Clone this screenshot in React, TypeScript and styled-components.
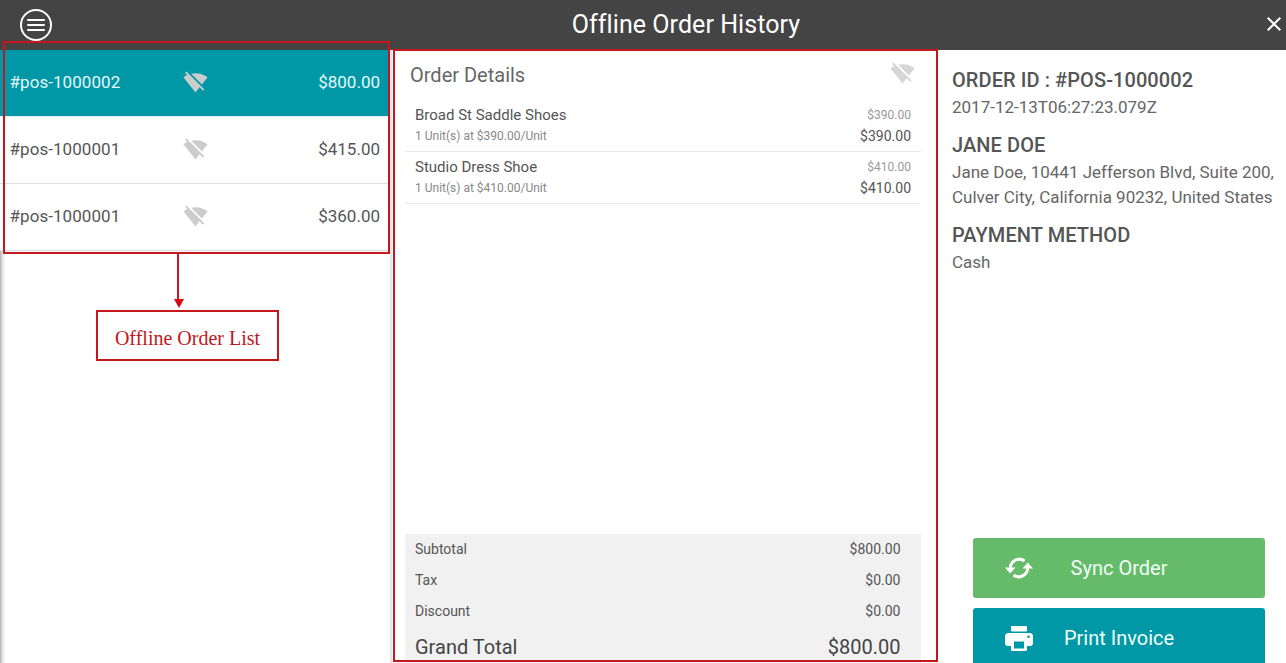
import React from "react";
import styled, { createGlobalStyle } from "styled-components";
import { MdSignalWifiOff, MdClose } from "react-icons/md";

const Global = createGlobalStyle`
  html, body { margin: 0; padding: 0; height: 100%; overflow: hidden; background: #fff; }
  * { box-sizing: border-box; }
  body { font-family: Roboto, "Liberation Sans", sans-serif; color: #555; }
`;
const Page = styled.div`
  position: relative; width: 1286px; height: 663px; overflow: hidden;
  display: flex; flex-direction: column; background: #fff;
`;
const Header = styled.header`
  position: relative; flex: 0 0 50px; height: 50px; background: #444; padding-left: 86px;
  display: flex; align-items: center; justify-content: center;
`;
const Title = styled.h1`
  margin: 0 0 2px; font-size: 25px; font-weight: 400; color: #fff; letter-spacing: 0.06px;
`;
const MenuButton = styled.div`
  position: absolute; left: 20px; top: 9px; width: 32px; height: 32px;
  border: 2px solid #fff; border-radius: 50%;
  display: flex; flex-direction: column; align-items: center; justify-content: center; gap: 3px;
`;
const MenuBar = styled.span`
  display: block; width: 18px; height: 2px; background: #fff; border-radius: 1px;
`;
const CloseButton = styled.div`
  position: absolute; right: 0; top: 12px; width: 24px; height: 24px; color: #fff;
  display: flex; align-items: center; justify-content: center;
`;
const Body = styled.main`
  flex: 1; min-height: 0; display: flex;
`;
const ListColumn = styled.section`
  flex: 0 0 392px; border-right: 2px solid #e6e6e6;
  background: linear-gradient(90deg, #b5b5b5 0, #ececec 3px, #fff 6px);
`;
const OrderRow = styled.div<{ $active?: boolean }>`
  height: 67px; padding: 0 10px 2px 9.5px; display: grid; grid-template-columns: 173.5px 28px 1fr;
  align-items: center; font-size: 17px; letter-spacing: 0.06px;
  background: ${(p) => (p.$active ? "#0097a7" : "#fff")};
  color: ${(p) => (p.$active ? "#e6f7f9" : "#555")};
  border-bottom: 1px solid ${(p) => (p.$active ? "#dff3f5" : "#ddd")};
`;
const WifiIcon = styled(MdSignalWifiOff)`
  display: block; color: #ccc; width: 25px; height: 25px;
`;
const HeadWifiIcon = styled(WifiIcon)`
  color: #d6d6d6; margin-top: -2px;
`;
const RowPrice = styled.span`
  text-align: right; letter-spacing: 0;
`;
const DetailColumn = styled.section`
  flex: 0 0 545px; height: 100%; padding: 0 16px 0 13px; display: flex; flex-direction: column;
`;
const DetailHead = styled.div`
  height: 50px; padding: 13px 6px 0 5px; display: flex; justify-content: space-between; align-items: flex-start;
`;
const DetailTitle = styled.h2`
  margin: 0; font-size: 20px; line-height: 24px; font-weight: 400; color: #666;
`;
const ItemList = styled.div`
  flex: 1; min-height: 0;
`;
const Item = styled.div`
  height: 52px; padding: 5px 10px 0 10px; border-bottom: 1px solid #e8e8e8;
  display: flex; justify-content: space-between;
`;
const ItemColumn = styled.div<{ $right?: boolean }>`
  display: flex; flex-direction: column; align-items: ${(p) => (p.$right ? "flex-end" : "flex-start")};
`;
const ItemName = styled.div`
  font-size: 15px; line-height: 20px; color: #555;
`;
const ItemUnit = styled.div`
  font-size: 12px; line-height: 20px; margin-top: 1px; color: #888;
`;
const ItemPrice = styled.div`
  font-size: 12px; line-height: 20px; color: #999;
`;
const ItemTotal = styled.div`
  font-size: 14px; line-height: 20px; margin-top: 1px; color: #555;
`;
const Summary = styled.div`
  flex: 0 0 129px; background: #f1f1f1; padding: 0 20.5px 0 10px;
`;
const SummaryRow = styled.div`
  height: 31px; padding-bottom: 2px; display: flex; justify-content: space-between; align-items: center; font-size: 14px; color: #555;
`;
const GrandRow = styled.div`
  height: 36px; padding-top: 4px; display: flex; justify-content: space-between; align-items: center;
  font-size: 20px; color: #444;
`;
const InfoColumn = styled.aside`
  flex: 1; min-width: 0; padding: 18px 0 0 15px; position: relative; display: flex; flex-direction: column;
`;
const InfoHeading = styled.h3`
  margin: 0; font-size: 20px; line-height: 25px; font-weight: 500; color: #555; letter-spacing: 0.08px;
`;
const InfoText = styled.p`
  margin: 2px 0 0; font-size: 17px; line-height: 25px; color: #666; white-space: nowrap;
`;
const InfoBlock = styled.div`
  margin-bottom: 13px;
`;
const Actions = styled.div`
  margin-top: auto; margin-bottom: -5px; padding-left: 21px; width: 313px;
  display: flex; flex-direction: column; gap: 10px;
`;
const ActionButton = styled.div<{ $color: string }>`
  height: 60px; border-radius: 3px; background: ${(p) => p.$color}; color: #f0fff5;
  display: grid; grid-template-columns: 90px 1fr 90px; align-items: center; font-size: 20px; text-align: center; white-space: nowrap;
`;
const ActionIcon = styled.span`
  display: flex; justify-content: center; padding-left: 2px;
`;
const Frame = styled.div<{ $x: number; $y: number; $w: number; $h: number }>`
  position: absolute; left: ${(p) => p.$x}px; top: ${(p) => p.$y}px; width: ${(p) => p.$w}px; height: ${(p) => p.$h}px;
  border: 2px solid #c4161c; pointer-events: none;
`;
const Stem = styled.div`
  position: absolute; left: 177px; top: 254px; width: 2px; height: 46px; background: #c4161c;
`;
const ArrowHead = styled.div`
  position: absolute; left: 173.5px; top: 299px; width: 0; height: 0;
  border-left: 5px solid transparent; border-right: 5px solid transparent; border-top: 9px solid #d9060f;
`;
const Callout = styled.div`
  position: absolute; left: 96px; top: 310px; width: 183px; height: 51px;
  border: 2px solid #c4161c; background: #fff; color: #c4161c;
  font-family: "Liberation Serif", serif; font-size: 20px;
  display: flex; align-items: center; justify-content: center; padding-top: 5px;
`;

const SyncGlyph = () => (
  <svg width="28" height="24" viewBox="0 0 28 24" fill="none">
    <path d="M5.5 13 A8.8 8.8 0 0 1 19.5 5" stroke="#fff" strokeWidth="3" />
    <path d="M22.5 11 A8.8 8.8 0 0 1 8.5 19" stroke="#fff" strokeWidth="3" />
    <path d="M0 11.5 H10.5 L5.2 17.5 Z" fill="#fff" />
    <path d="M17.5 12.5 H28 L22.8 6.5 Z" fill="#fff" />
  </svg>
);
const PrintGlyph = () => (
  <svg width="28" height="25" viewBox="0 0 28 25">
    <rect x="6" y="0" width="16" height="5.5" rx="1" fill="#fff" />
    <path
      fillRule="evenodd"
      fill="#fff"
      d="M3.5 7 H24.5 A3.5 3.5 0 0 1 28 10.5 V17 A3 3 0 0 1 25 20 H22 V24 A1 1 0 0 1 21 25 H7 A1 1 0 0 1 6 24 V20 H3 A3 3 0 0 1 0 17 V10.5 A3.5 3.5 0 0 1 3.5 7 Z M23.5 9.5 A1.3 1.3 0 1 0 23.5 12.1 A1.3 1.3 0 1 0 23.5 9.5 Z M9 15.5 V22.5 H19 V15.5 Z"
    />
  </svg>
);

const orders = [
  { id: "#pos-1000002", price: "$800.00", active: true },
  { id: "#pos-1000001", price: "$415.00" },
  { id: "#pos-1000001", price: "$360.00" },
];
const items = [
  { name: "Broad St Saddle Shoes", price: "$390.00" },
  { name: "Studio Dress Shoe", price: "$410.00" },
];
const totals = [
  ["Subtotal", "$800.00"],
  ["Tax", "$0.00"],
  ["Discount", "$0.00"],
];

export default function App() {
  return (
    <Page>
      <Global />
      <Header>
        <MenuButton><MenuBar /><MenuBar /><MenuBar /></MenuButton>
        <Title>Offline Order History</Title>
        <CloseButton><MdClose size={24} /></CloseButton>
      </Header>
      <Body>
        <ListColumn>
          {orders.map((o, i) => (
            <OrderRow key={i} $active={o.active}>
              <span>{o.id}</span>
              <WifiIcon />
              <RowPrice>{o.price}</RowPrice>
            </OrderRow>
          ))}
        </ListColumn>
        <DetailColumn>
          <DetailHead>
            <DetailTitle>Order Details</DetailTitle>
            <HeadWifiIcon />
          </DetailHead>
          <ItemList>
            {items.map((it) => (
              <Item key={it.name}>
                <ItemColumn>
                  <ItemName>{it.name}</ItemName>
                  <ItemUnit>1 Unit(s) at {it.price}/Unit</ItemUnit>
                </ItemColumn>
                <ItemColumn $right>
                  <ItemPrice>{it.price}</ItemPrice>
                  <ItemTotal>{it.price}</ItemTotal>
                </ItemColumn>
              </Item>
            ))}
          </ItemList>
          <Summary>
            {totals.map(([k, v]) => (
              <SummaryRow key={k}><span>{k}</span><span>{v}</span></SummaryRow>
            ))}
            <GrandRow><span>Grand Total</span><span>$800.00</span></GrandRow>
          </Summary>
        </DetailColumn>
        <InfoColumn>
          <InfoBlock>
            <InfoHeading>ORDER ID : #POS-1000002</InfoHeading>
            <InfoText>2017-12-13T06:27:23.079Z</InfoText>
          </InfoBlock>
          <InfoBlock>
            <InfoHeading>JANE DOE</InfoHeading>
            <InfoText>Jane Doe, 10441 Jefferson Blvd, Suite 200,<br />Culver City, California 90232, United States</InfoText>
          </InfoBlock>
          <InfoBlock>
            <InfoHeading>PAYMENT METHOD</InfoHeading>
            <InfoText>Cash</InfoText>
          </InfoBlock>
          <Actions>
            <ActionButton $color="#66bb6a">
              <ActionIcon><SyncGlyph /></ActionIcon>
              <span>Sync Order</span>
            </ActionButton>
            <ActionButton $color="#0097a7">
              <ActionIcon><PrintGlyph /></ActionIcon>
              <span>Print Invoice</span>
            </ActionButton>
          </Actions>
        </InfoColumn>
      </Body>
      <Frame $x={3} $y={41} $w={387} $h={213} />
      <Frame $x={393} $y={49} $w={545} $h={613} />
      <Stem />
      <ArrowHead />
      <Callout>Offline Order List</Callout>
    </Page>
  );
}
